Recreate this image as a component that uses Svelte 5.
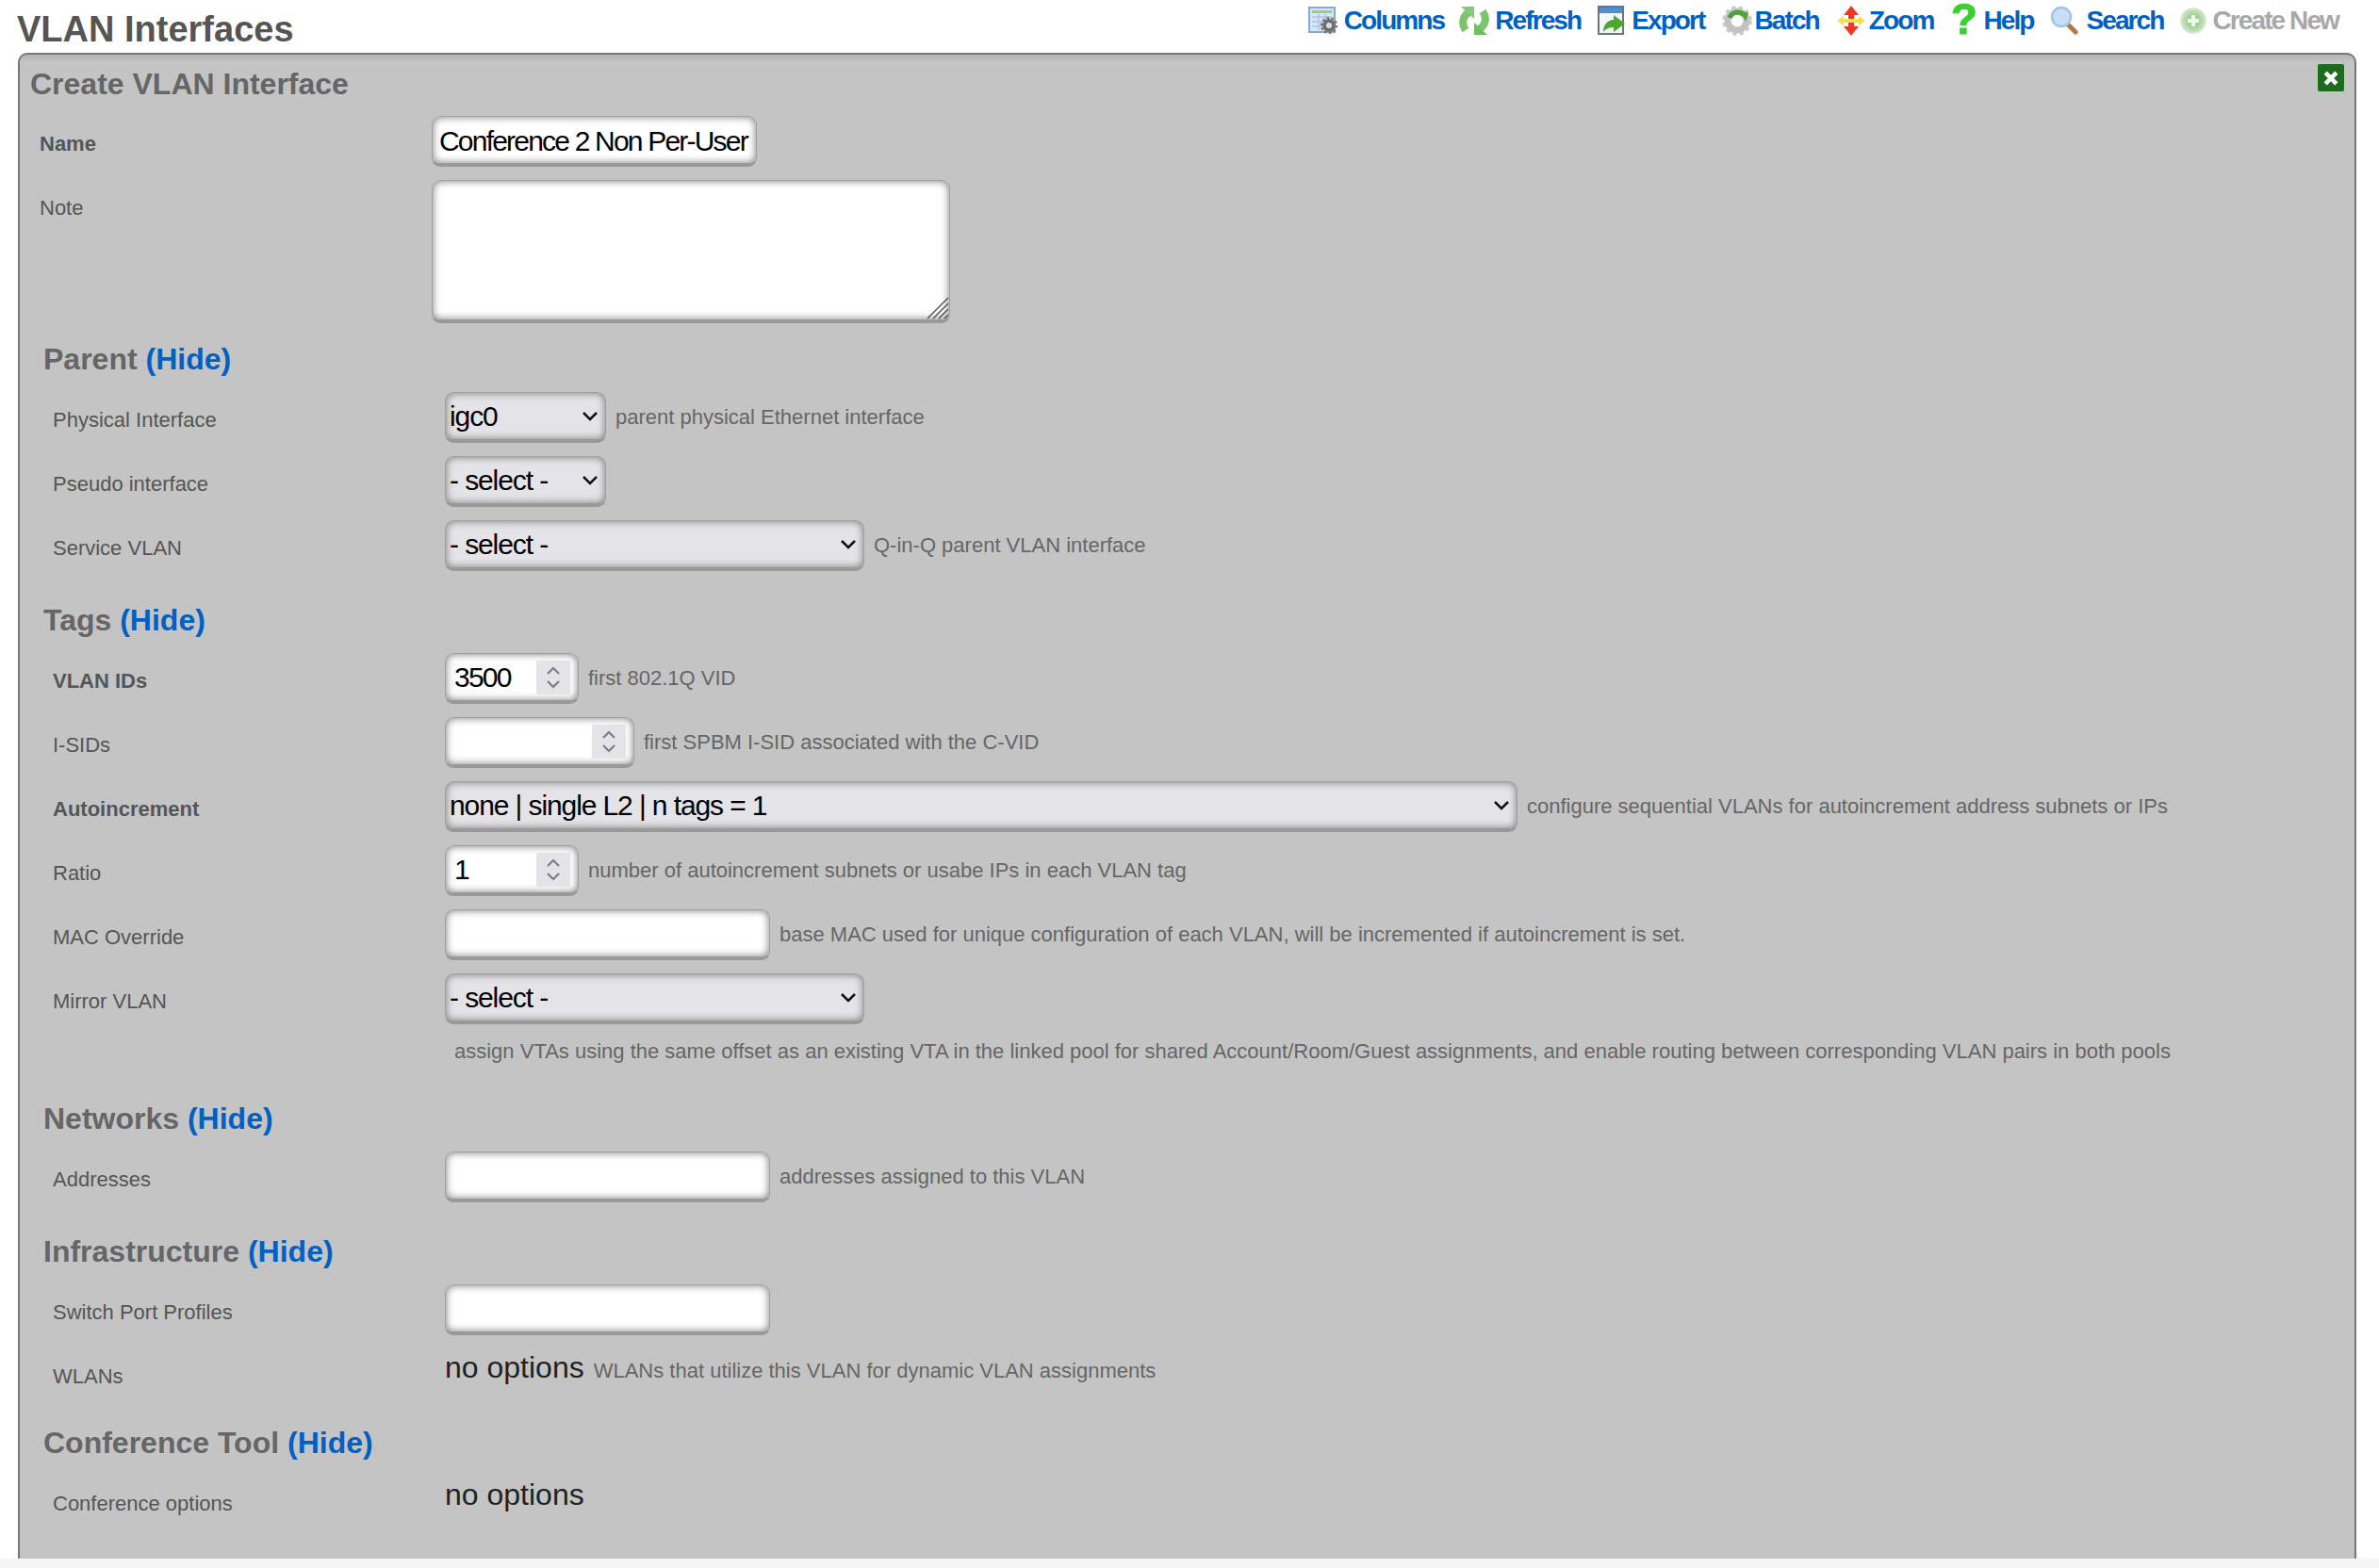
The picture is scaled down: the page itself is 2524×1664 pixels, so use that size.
<script>
    const sections = [
        {
            title: "Parent",
            rows: [
                { label: "Physical Interface", kind: "select", width: 171, value: "igc0", note: "parent physical Ethernet interface" },
                { label: "Pseudo interface", kind: "select", width: 171, value: "- select -" },
                { label: "Service VLAN", kind: "select", width: 445, value: "- select -", note: "Q-in-Q parent VLAN interface" }
            ]
        },
        {
            title: "Tags",
            rows: [
                { label: "VLAN IDs", bold: true, kind: "number", width: 142, value: "3500", note: "first 802.1Q VID" },
                { label: "I-SIDs", kind: "number", width: 201, value: "", note: "first SPBM I-SID associated with the C-VID" },
                { label: "Autoincrement", bold: true, kind: "select", width: 1138, value: "none | single L2 | n tags = 1", note: "configure sequential VLANs for autoincrement address subnets or IPs" },
                { label: "Ratio", kind: "number", width: 142, value: "1", note: "number of autoincrement subnets or usabe IPs in each VLAN tag" },
                { label: "MAC Override", kind: "text", width: 345, value: "", note: "base MAC used for unique configuration of each VLAN, will be incremented if autoincrement is set." },
                { label: "Mirror VLAN", kind: "select", width: 445, value: "- select -" }
            ],
            footnote: "assign VTAs using the same offset as an existing VTA in the linked pool for shared Account/Room/Guest assignments, and enable routing between corresponding VLAN pairs in both pools"
        },
        {
            title: "Networks",
            rows: [{ label: "Addresses", kind: "text", width: 345, value: "", note: "addresses assigned to this VLAN" }]
        },
        {
            title: "Infrastructure",
            rows: [
                { label: "Switch Port Profiles", kind: "text", width: 345, value: "" },
                { label: "WLANs", kind: "static", note: "WLANs that utilize this VLAN for dynamic VLAN assignments" }
            ]
        },
        {
            title: "Conference Tool",
            rows: [{ label: "Conference options", kind: "static" }]
        }
    ];

    const tools = ["Columns", "Refresh", "Export", "Batch", "Zoom", "Help", "Search", "Create New"];
</script>

<div class="page">
    <header class="top">
        <h1>VLAN Interfaces</h1>
        <nav class="tools">
            {#each tools as tool}
                <a href="#top" class="tool" class:off={tool === "Create New"}>
                    {#if tool === "Columns"}
                        <svg width="32" height="30" viewBox="0 0 32 30">
                            <rect x="1" y="1" width="27" height="26" fill="#d8e6f6" stroke="#86a9d6" stroke-width="2"/>
                            <rect x="4" y="4" width="21" height="3" fill="#9ccf86"/>
                            <path d="M4 11h21M4 16h21M4 21h21M11 8v17M18 8v17" stroke="#a9c5e6" stroke-width="1.500"/>
                            <circle cx="22" cy="20" r="5" fill="#dcdcdc" stroke="#6f6f6f" stroke-width="4"/>
                            <circle cx="22" cy="20" r="8" fill="none" stroke="#777" stroke-width="2.500" stroke-dasharray="2.5 2.5"/>
                        </svg>
                    {:else if tool === "Refresh"}
                        <svg class="pull" width="32" height="32" viewBox="0 0 32 32">
                            <path d="M11 7C4 10 2 19 7 26" fill="none" stroke="#7cc56c" stroke-width="8"/>
                            <path d="M2 1h14v13z" fill="#86c978"/>
                            <path d="M21 25C28 22 30 13 25 6" fill="none" stroke="#7cc56c" stroke-width="8"/>
                            <path d="M30 31H16V18z" fill="#6fbf60"/>
                        </svg>
                    {:else if tool === "Export"}
                        <svg width="30" height="32" viewBox="0 0 30 32">
                            <rect x="1" y="1" width="26" height="29" fill="#f2f6fb" stroke="#6b7480" stroke-width="2"/>
                            <rect x="2" y="2" width="24" height="6" fill="#4f8fd0"/>
                            <path d="M6 28c0-8 5-13 11-13v-5l12 9-12 9v-5c-4 0-8 1-11 5z" fill="#4fa52f"/>
                        </svg>
                    {:else if tool === "Batch"}
                        <svg class="squeeze" width="32" height="32" viewBox="0 0 32 32">
                            <circle cx="16" cy="16" r="10" fill="none" stroke="#c2c2c2" stroke-width="7"/>
                            <circle cx="16" cy="16" r="14" fill="none" stroke="#c8c8c8" stroke-width="3.500" stroke-dasharray="4 3.5"/>
                            <path d="M8 13a9 9 0 0 1 15-3" fill="none" stroke="#4fa238" stroke-width="5"/>
                            <path d="M19 5l9 3-3 9z" fill="#4fa238"/>
                        </svg>
                    {:else if tool === "Zoom"}
                        <svg class="squeeze" width="32" height="34" viewBox="0 0 32 34">
                            <path d="M1 17l7-5v3h16v-3l7 5-7 5v-3H8v3z" fill="#f7e14a"/>
                            <path d="M16 1l8 10h-5v4h-6v-4H8z" fill="#ee3a24"/>
                            <path d="M16 33l8-10h-5v-4h-6v4H8z" fill="#ee3a24"/>
                        </svg>
                    {:else if tool === "Help"}
                        <span class="glyph">?</span>
                    {:else if tool === "Search"}
                        <svg width="32" height="32" viewBox="0 0 32 32">
                            <path d="M19 20l8 8" stroke="#b5773f" stroke-width="5" stroke-linecap="round"/>
                            <circle cx="12" cy="12" r="10" fill="#c7dff5" stroke="#a3c4e6" stroke-width="2.500"/>
                        </svg>
                    {:else}
                        <svg width="28" height="30" viewBox="0 0 28 30">
                            <circle cx="14" cy="15" r="12.500" fill="#b9dcae" stroke="#cfe5c9" stroke-width="2.500"/>
                            <circle cx="14" cy="15" r="8" fill="#a3cf98"/>
                            <path d="M14 9v12M8 15h12" stroke="#eef7ea" stroke-width="4"/>
                        </svg>
                    {/if}
                    <span>{tool}</span>
                </a>
            {/each}
        </nav>
    </header>

    <main class="panel">
        <div class="panel-head">
            <h2>Create VLAN Interface</h2>
            <button class="close" aria-label="Close">
                <svg width="18" height="18" viewBox="0 0 14 14">
                    <path d="M2.500 2.500l9 9M11.500 2.500l-9 9" stroke="#fff" stroke-width="3.500"/>
                </svg>
            </button>
        </div>

        <div class="row">
            <div class="label strong">Name</div>
            <input class="field name" type="text" value="Conference 2 Non Per-User" />
        </div>
        <div class="row note-row">
            <div class="label">Note</div>
            <div class="area-wrap">
                <textarea class="field area"></textarea>
                <svg class="grip" width="24" height="24" viewBox="0 0 24 24">
                    <path d="M23 1L1 23M23 7L7 23M23 13L13 23M23 19L19 23" stroke="#555" stroke-width="1.500"/>
                </svg>
            </div>
        </div>

        {#each sections as section}
            <section class="section">
                <h3>{section.title} <a href="#top">(Hide)</a></h3>
                {#each section.rows as row}
                    <div class="row inner" class:static-row={row.kind === "static"}>
                        <div class="label" class:strong={row.bold}>{row.label}</div>
                        <div class="control">
                            {#if row.kind === "select"}
                                <select class="field pick" style="width: {row.width}px">
                                    <option>{row.value}</option>
                                </select>
                            {:else if row.kind === "number"}
                                <div class="spin-wrap" style="width: {row.width}px">
                                    <input class="field num" type="text" value={row.value} />
                                    <span class="spin">
                                        <svg width="18" height="28" viewBox="0 0 18 28">
                                            <path d="M3 10l6-6 6 6M3 18l6 6 6-6" fill="none" stroke="#7d7d88" stroke-width="2.200"/>
                                        </svg>
                                    </span>
                                </div>
                            {:else if row.kind === "text"}
                                <input class="field" type="text" style="width: {row.width}px" value={row.value} />
                            {:else}
                                <span class="static">no options</span>
                            {/if}
                            {#if row.note}
                                <span class="note">{row.note}</span>
                            {/if}
                        </div>
                    </div>
                {/each}
                {#if section.footnote}
                    <div class="footnote">{section.footnote}</div>
                {/if}
            </section>
        {/each}
    </main>

    <div class="strip"></div>
</div>

<style>
    :global(body) {
        margin: 0;
        background: #fff;
    }
    .page {
        height: 1664px;
        display: flex;
        flex-direction: column;
        overflow: hidden;
        font-family: "Liberation Sans", Arial, sans-serif;
    }
    .top {
        height: 56px;
        flex: none;
        display: flex;
        justify-content: space-between;
        padding: 0 43px 0 18px;
    }
    h1 {
        margin: 11px 0 0;
        font-size: 38px;
        line-height: 40px;
        color: #555;
        font-weight: bold;
    }
    .tools {
        display: flex;
        gap: 18px;
        height: 44px;
        align-items: center;
    }
    .tool {
        display: flex;
        align-items: center;
        gap: 6px;
        font-size: 28px;
        font-weight: bold;
        letter-spacing: -1.900px;
        color: #0060c4;
        text-decoration: none;
    }
    .tool svg {
        filter: blur(0.5px);
    }
    .tool.off {
        color: #a8a8a8;
    }
    .squeeze {
        margin-right: -3px;
    }
    .pull {
        margin-left: -2px;
    }
    .glyph {
        font-size: 46px;
        line-height: 52px;
        height: 52px;
        margin: -6px 0 -2px;
        font-weight: bold;
        letter-spacing: 0;
        color: #3ccf32;
        width: 29px;
        text-align: center;
        -webkit-text-stroke: 1px #3ccf32;
        filter: blur(0.5px);
    }
    .panel {
        flex: 1;
        min-height: 0;
        margin-right: 24px;
        margin-left: 19px;
        padding: 0 0 0 21px;
        background: linear-gradient(#b4b4b4, #c4c4c4 8px);
        border: 2px solid #777;
        border-bottom: 0;
        border-radius: 10px 10px 0 0;
        box-sizing: border-box;
    }
    .panel-head {
        display: flex;
        justify-content: space-between;
        height: 65px;
    }
    h2 {
        margin: 12px 0 0 -10px;
        font-size: 32px;
        line-height: 38px;
        color: #666;
    }
    .close {
        width: 30px;
        height: 31px;
        margin: 9px 10px 0 0;
        padding: 0;
        display: flex;
        align-items: center;
        justify-content: center;
        background: #1e6a1e;
        border: 1px solid #a5e29a;
        border-radius: 3px;
    }
    .row {
        display: flex;
        align-items: flex-start;
        margin-bottom: 14px;
    }
    .note-row {
        margin-bottom: 0;
    }
    .inner {
        margin-left: 14px;
    }
    .label {
        width: 416px;
        flex: none;
        padding-top: 17px;
        font-size: 22px;
        line-height: 26px;
        color: #555;
    }
    .strong {
        font-weight: bold;
    }
    .control {
        display: flex;
        align-items: center;
        gap: 10px;
        min-height: 54px;
    }
    .static-row .control {
        align-items: baseline;
        min-height: 48px;
    }
    .static {
        font-size: 32px;
        line-height: 40px;
        color: #222;
    }
    .note {
        font-size: 22px;
        line-height: 26px;
        color: #666;
    }
    .field {
        box-sizing: border-box;
        height: 54px;
        margin: 0;
        padding: 0 6px;
        font-family: "Liberation Sans", Arial, sans-serif;
        font-size: 30px;
        letter-spacing: -1.800px;
        color: #000;
        background: #fff;
        border: 1px solid #a0a0a0;
        border-bottom: 4px solid #999;
        border-radius: 9px;
        box-shadow: inset 0 0 9px #777;
        outline: none;
    }
    .name {
        width: 345px;
        padding: 2px 0 0 7px;
    }
    .area-wrap {
        position: relative;
    }
    .area {
        display: block;
        width: 550px;
        height: 152px;
        resize: none;
    }
    .grip {
        position: absolute;
        right: 1px;
        bottom: 4px;
    }
    .pick {
        appearance: none;
        padding: 0 30px 0 4px;
        letter-spacing: -1.100px;
        background-color: #e3e3e8;
        background-image: url("data:image/svg+xml,%3Csvg xmlns='http://www.w3.org/2000/svg' width='16' height='11' viewBox='0 0 16 11'%3E%3Cpath d='M1 2l7 7 7-7' fill='none' stroke='%23111' stroke-width='2.500'/%3E%3C/svg%3E");
        background-repeat: no-repeat;
        background-position: right 8px center;
    }
    .spin-wrap {
        position: relative;
        height: 54px;
    }
    .num {
        width: 100%;
        padding-left: 9px;
    }
    .spin {
        position: absolute;
        top: 8px;
        right: 9px;
        width: 36px;
        height: 36px;
        display: flex;
        align-items: center;
        justify-content: center;
        background: #e3e3e8;
    }
    .section {
        padding-top: 20px;
    }
    h3 {
        margin: 0 0 17px 4px;
        font-size: 32px;
        line-height: 36px;
        color: #666;
    }
    h3 a {
        color: #0060c4;
        text-decoration: none;
    }
    .footnote {
        margin: 16px 0 20px 440px;
        font-size: 22px;
        line-height: 26px;
        color: #666;
        white-space: nowrap;
    }
    .strip {
        height: 10px;
        flex: none;
        background: #f5f5f5;
    }
</style>
